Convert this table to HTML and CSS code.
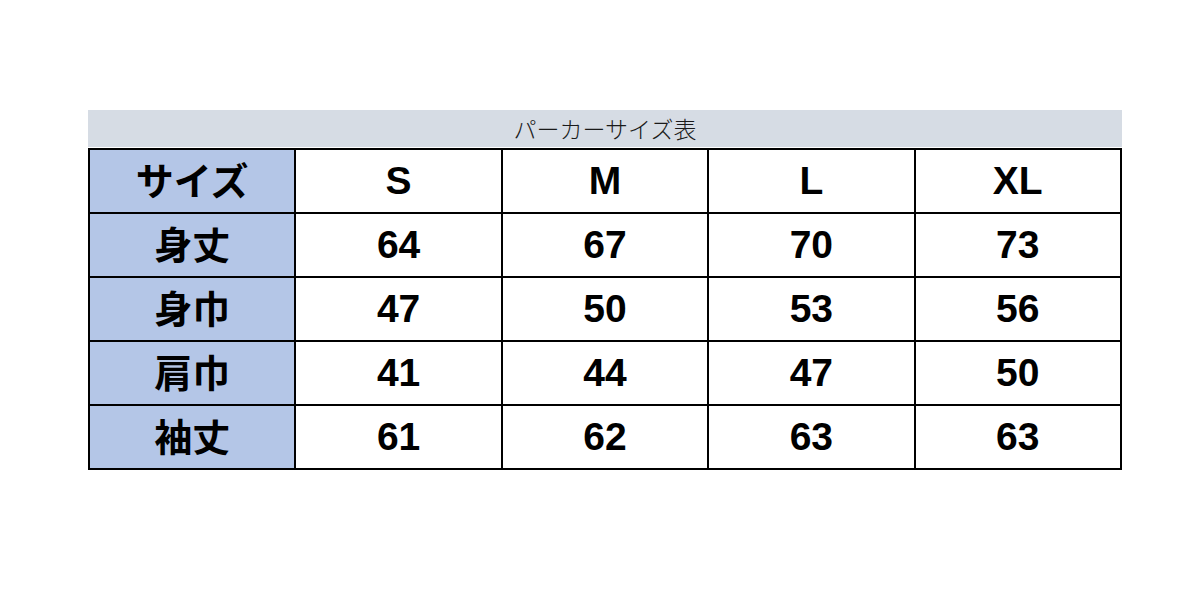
FILE: index.html
```html
<!DOCTYPE html>
<html lang="ja">
<head>
<meta charset="utf-8">
<link rel="stylesheet" href="styles.css">
</head>
<body>
<div class="wrap">
  <div class="title">パーカーサイズ表</div>
  <table class="size">
    <tr><th>サイズ</th><td>S</td><td>M</td><td>L</td><td>XL</td></tr>
    <tr><th>身丈</th><td>64</td><td>67</td><td>70</td><td>73</td></tr>
    <tr><th>身巾</th><td>47</td><td>50</td><td>53</td><td>56</td></tr>
    <tr><th>肩巾</th><td>41</td><td>44</td><td>47</td><td>50</td></tr>
    <tr><th>袖丈</th><td>61</td><td>62</td><td>63</td><td>63</td></tr>
  </table>
</div>
</body>
</html>
```
FILE: styles.css
```css
html, body {
  margin: 0;
  padding: 0;
  background: #ffffff;
}
body {
  font-family: "Noto Sans CJK JP", "Noto Sans", sans-serif;
  color: #000;
}
.wrap {
  width: 1034px;
  margin: 110px 0 0 88px;
}
.title {
  height: 37px;
  background: #d6dce4;
  text-align: center;
  font-size: 23px;
  line-height: 37px;
  color: #1a1a1a;
  font-weight: 300;
}
.size {
  width: 1034px;
  border-collapse: collapse;
  table-layout: fixed;
  margin-top: 1px;
}
.size th, .size td {
  border: 2px solid #000;
  height: 62px;
  padding: 0;
  text-align: center;
  vertical-align: middle;
  font-weight: bold;
  line-height: 1;
}
.size th {
  background: #b4c6e7;
  font-family: "Noto Sans CJK JP", sans-serif;
  font-size: 38px;
  font-weight: 700;
  padding-bottom: 5px;
  height: 57px;
}
.size td {
  background: #fff;
  font-family: "Liberation Sans", "Noto Sans CJK JP", sans-serif;
  font-size: 39px;
  padding-bottom: 2px;
  height: 60px;
}
```
